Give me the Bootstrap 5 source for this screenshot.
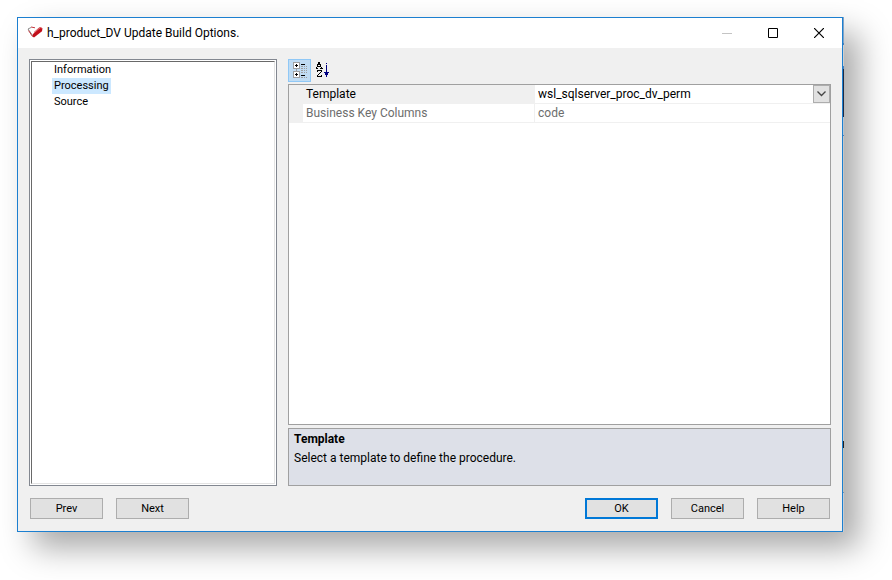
<!DOCTYPE html>
<html lang="en">
<head>
<meta charset="utf-8">
<meta name="viewport" content="width=device-width, initial-scale=1">
<title>h_product_DV Update Build Options.</title>
<link href="https://cdn.jsdelivr.net/npm/bootstrap@5.3.0/dist/css/bootstrap.min.css" rel="stylesheet">
<style>
  body { font: 12px/16px Roboto, "Open Sans", sans-serif; color: #000; background: #fff; }
  .stage { padding: 17px 48px 48px 17px; }
  .dialog-window { background: #f0f0f0; border: 1px solid #1c7fd0; box-shadow: 16px 16px 30px rgba(0,0,0,.34); min-width: 0; }
  .backdrop-edge { width: 1px; background: linear-gradient(#7fa3c7 0 26px, #4d7fb5 26px 28px, #cfcfcf 28px 49px, #4d7fb5 49px 52px, #1d2a44 52px 100px, #b8c4d0 100px 118px, #4d7fb5 118px 119px, #c6c6c6 119px 424px, #222 424px 431px, #c2c2b8 431px 475px, #6b8fb5 475px 476px, #c6ccd2 476px); z-index: 1; }
  .title-bar { height: 30px; background: #fff; padding-left: 9px; }
  .title-text { font-size: 12px; line-height: 16px; font-weight: 400; }
  .caption-btn { width: 46px; height: 30px; border: 0; background: none; padding: 0; }
  .work-area { padding: 11px 11px 12px; gap: 11px; }
  .tree-pane { width: 248px; border: 1px solid #828790; background: #fff; padding: 1px; }
  .tree-inner { border: 1px solid #e3e3e3; border-top-color: #696969; border-left-color: #696969; padding-left: 20px; }
  .tree-item { font-size: 11px; line-height: 16px; color: #000; text-decoration: none; padding: 0 2px; }
  .tree-item.selected { background: #cce8ff; }
  .tool-btn { width: 23px; height: 23px; border: 1px solid transparent; background: none; padding: 0; }
  .tool-btn.pressed { background: #c0dcf3; border-color: #90c8f6; }
  .prop-box { border: 1px solid #a0a0a0; background: #fff; margin-top: 2px; }
  .prop-table { table-layout: fixed; border-collapse: separate; border-spacing: 0; }
  .prop-table td, .prop-table th { height: 19px; padding: 0 3px; border-bottom: 1px solid #f0f0f0; font-weight: 400; line-height: 16px; }
  .prop-table .gutter { width: 14px; background: #f0f0f0; }
  .prop-table .prop-name { width: 232px; border-right: 1px solid #f0f0f0; }
  .prop-table .current { background: #f0f0f0; }
  .prop-table .readonly td, .prop-table .readonly th { color: #6d6d6d; }
  .value-select { appearance: none; border: 0; padding: 0; background: none; color: #000; font: inherit; height: 16px; outline: 0; }
  .drop-mark { width: 17px; height: 18px; border: 1px solid #adadad; background: #e1e1e1; right: 0; top: 0; pointer-events: none; }
  .help-box { min-height: 58px; border: 1px solid #a0a0a0; background: #dde0e8; margin-top: 3px; padding: 2px 5px; }
  .help-title { font-size: 12px; line-height: 16px; font-weight: 700; margin: 0 0 3px; }
  .button-row { padding: 0 12px 12px; gap: 13px; }
  .dlg-btn { width: 73px; height: 21px; border: 1px solid #adadad; background: #e1e1e1; color: #000; padding: 0; font-size: 11px; line-height: 19px; }
  .dlg-btn.default-btn { border: 2px solid #0078d7; line-height: 17px; }
</style>
</head>
<body>
<div class="stage d-flex min-vh-100">
  <main class="dialog-window d-flex flex-column flex-grow-1" role="dialog" aria-labelledby="dlgTitle">
    <header class="title-bar d-flex align-items-center">
      <svg width="16" height="16" viewBox="0 0 16 16" aria-hidden="true">
        <path d="M4 2.500L1 4l5 7" fill="none" stroke="#8a8a8a"/>
        <path d="M4 2l4 .8M1.500 5.500l4 6" fill="none" stroke="#c23a40"/>
        <path d="M6 9L13.500 2.500l2 .8-.5 3L7 12.500l-1.500-1z" fill="#c20f1b"/>
        <path d="M7 7.500l5.500-5 2.500.8" fill="none" stroke="#d8474c"/>
      </svg>
      <h1 class="title-text mb-0 ms-1 me-auto" id="dlgTitle">h_product_DV Update Build Options.</h1>
      <button type="button" class="caption-btn d-flex align-items-center justify-content-center" aria-label="Minimize" disabled><svg width="10" height="10" aria-hidden="true"><path d="M0 5.500h10" stroke="#c4c4c4"/></svg></button>
      <button type="button" class="caption-btn d-flex align-items-center justify-content-center" aria-label="Maximize"><svg width="10" height="10" aria-hidden="true"><path d="M.5.5h9v9h-9z" fill="none" stroke="#000"/></svg></button>
      <button type="button" class="caption-btn d-flex align-items-center justify-content-center" aria-label="Close"><svg width="10" height="10" aria-hidden="true"><path d="M0 0l10 10M10 0L0 10" stroke="#000" stroke-width="1.200"/></svg></button>
    </header>
    <div class="work-area d-flex flex-grow-1">
      <nav class="tree-pane d-flex flex-shrink-0" aria-label="Option pages">
        <div class="tree-inner d-flex flex-column align-items-start flex-grow-1">
          <a class="tree-item" href="#information">Information</a>
          <a class="tree-item selected" href="#processing" aria-current="page">Processing</a>
          <a class="tree-item" href="#source">Source</a>
        </div>
      </nav>
      <section class="d-flex flex-column flex-grow-1">
        <div class="d-flex" role="toolbar" aria-label="Property order">
          <button type="button" class="tool-btn pressed d-flex align-items-center justify-content-center" aria-label="Categorized" aria-pressed="true">
            <svg width="15" height="17" viewBox="-1 0 15 17" shape-rendering="crispEdges" fill="none" aria-hidden="true">
              <path d="M.5.5h6v6h-6zM.5 9.500h6v6h-6z" fill="#fff" stroke="#a0a0a0"/>
              <path d="M3.500 7v2" stroke="#a0a0a0"/>
              <path d="M2 3.500h3M3.500 2v3M2 12.500h3M3.500 11v3M8 2.500h4M8 13.500h4" stroke="#000"/>
              <path d="M8 4.500h2M11 4.500h1M13 4.500h1M8 6.500h2M11 6.500h1M13 6.500h1M8 8.500h2M11 8.500h1M13 8.500h1M8 10.500h2M11 10.500h1M13 10.500h1M8 15.500h2M11 15.500h1M13 15.500h1" stroke="#a0a0a0"/>
            </svg>
          </button>
          <button type="button" class="tool-btn d-flex align-items-center justify-content-center" aria-label="Alphabetical">
            <svg width="15" height="17" viewBox="0 0 15 17" shape-rendering="crispEdges" fill="none" aria-hidden="true">
              <path d="M3 .5h2M4.500 1v2M3.500 1v2M2.500 2v3M5.500 2v3M2 4.500h4M1.500 5v1M6.500 5v1M1 6.500h2M5 6.500h3M2 8.500h5M2.500 8v2M6.500 8v2M5.500 10v1M4.500 11v1M3.500 12v1M2.500 13v1M2 14.500h5M6.500 13v2" stroke="#000"/>
              <path d="M11.500 1v1M11.500 3v8" stroke="#000080"/><path d="M9 10h5v1h-1v2h-1v2h-1v-2h-1v-2H9z" fill="#000080"/>
            </svg>
          </button>
        </div>
        <div class="prop-box flex-grow-1">
          <table class="prop-table w-100">
            <tbody>
              <tr>
                <td class="gutter"></td>
                <th class="prop-name current" scope="row"><label for="templateValue">Template</label></th>
                <td class="position-relative">
                  <select class="value-select w-100 d-block" id="templateValue"><option>wsl_sqlserver_proc_dv_perm</option></select>
                  <span class="drop-mark position-absolute d-flex align-items-center justify-content-center"><svg width="9" height="6" aria-hidden="true"><path d="M.5.5l4 4 4-4" fill="none" stroke="#444" stroke-width="1.300"/></svg></span>
                </td>
              </tr>
              <tr class="readonly">
                <td class="gutter"></td>
                <th class="prop-name" scope="row">Business Key Columns</th>
                <td>code</td>
              </tr>
            </tbody>
          </table>
        </div>
        <div class="help-box">
          <h2 class="help-title">Template</h2>
          <p class="mb-0">Select a template to define the procedure.</p>
        </div>
      </section>
    </div>
    <footer class="button-row d-flex">
      <button type="button" class="dlg-btn">Prev</button>
      <button type="button" class="dlg-btn me-auto">Next</button>
      <button type="button" class="dlg-btn default-btn">OK</button>
      <button type="button" class="dlg-btn">Cancel</button>
      <button type="button" class="dlg-btn">Help</button>
    </footer>
  </main>
  <div class="backdrop-edge flex-shrink-0" aria-hidden="true"></div>
</div>
<script src="https://cdn.jsdelivr.net/npm/bootstrap@5.3.0/dist/js/bootstrap.bundle.min.js"></script>
</body>
</html>
